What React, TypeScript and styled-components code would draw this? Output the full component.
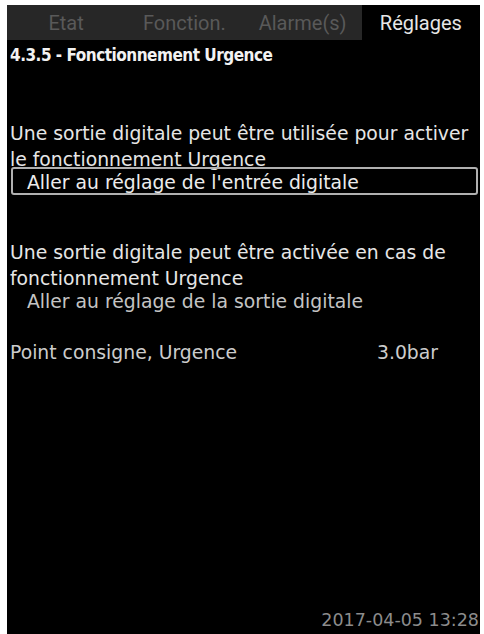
import { createGlobalStyle } from "styled-components";
import styled from "styled-components";

const GlobalStyle = createGlobalStyle`
  html, body {
    margin: 0;
    padding: 0;
    background: #ffffff;
  }
  body {
    font-family: "DejaVu Sans", Verdana, sans-serif;
  }
`;

type Tab = { label: string; active?: boolean };

const tabs: Tab[] = [
  { label: "Etat" },
  { label: "Fonction." },
  { label: "Alarme(s)" },
  { label: "Réglages", active: true },
];

type Section = { text: string[]; link: string; focused?: boolean };

const sections: Section[] = [
  {
    text: [
      "Une sortie digitale peut être utilisée pour activer",
      "le fonctionnement Urgence",
    ],
    link: "Aller au réglage de l'entrée digitale",
    focused: true,
  },
  {
    text: [
      "Une sortie digitale peut être activée en cas de",
      "fonctionnement Urgence",
    ],
    link: "Aller au réglage de la sortie digitale",
  },
];

export default function App() {
  return (
    <>
      <GlobalStyle />
      <Screen>
        <TabBar>
          {tabs.map((tab) => (
            <TabItem key={tab.label} $active={!!tab.active}>
              {tab.label}
            </TabItem>
          ))}
        </TabBar>
        <Title>4.3.5 - Fonctionnement Urgence</Title>
        <Body>
          {sections.map((section) => (
            <Block key={section.link}>
              <Paragraph>
                {section.text.map((line) => (
                  <div key={line}>{line}</div>
                ))}
              </Paragraph>
              <LinkRow $focused={!!section.focused}>{section.link}</LinkRow>
            </Block>
          ))}
          <ValueRow>
            <span>Point consigne, Urgence</span>
            <Value>3.0bar</Value>
          </ValueRow>
        </Body>
        <Footer>2017-04-05 13:28</Footer>
      </Screen>
    </>
  );
}

const Screen = styled.div`
  box-sizing: border-box;
  width: 473px;
  height: 629px;
  margin: 5px 0 0 7px;
  background: #000;
  color: #e4e4e4;
  display: flex;
  flex-direction: column;
  overflow: hidden;
`;

const TabBar = styled.div`
  display: flex;
  height: 35px;
  background: #272727;
`;

const TabItem = styled.div<{ $active: boolean }>`
  flex: 1 1 0;
  display: flex;
  align-items: center;
  justify-content: center;
  font-family: Roboto, "DejaVu Sans", sans-serif;
  font-size: 20px;
  color: ${({ $active }) => ($active ? "#e6e6e6" : "#595959")};
  background: ${({ $active }) => ($active ? "#000" : "transparent")};
`;

const Title = styled.div`
  padding: 5px 0 0 3px;
  height: 20px;
  line-height: 20px;
  font-family: "DejaVu Sans Condensed", "Liberation Sans Narrow", sans-serif;
  font-stretch: condensed;
  font-weight: 700;
  font-size: 17px;
  letter-spacing: -0.5px;
  color: #f2f2f2;
`;

const Body = styled.div`
  display: flex;
  flex-direction: column;
  padding: 56px 0 0 3px;
  font-size: 18.8px;
  line-height: 26px;
`;

const Block = styled.div`
  display: flex;
  flex-direction: column;

  & + & {
    margin-top: 45px;
  }
`;

const Paragraph = styled.div`
  color: #e6e6e6;
`;

const LinkRow = styled.div<{ $focused: boolean }>`
  box-sizing: border-box;
  height: 28px;
  margin: -6px 2px 0 1px;
  padding: 4px 0 0 14px;
  line-height: 20px;
  border: 2px solid ${({ $focused }) => ($focused ? "#b0b0b0" : "transparent")};
  border-radius: 3px;
  color: ${({ $focused }) => ($focused ? "#ececec" : "#c4c4c4")};
`;

const ValueRow = styled.div`
  display: flex;
  margin-top: 26px;
  color: #cccccc;
`;

const Value = styled.span`
  margin-left: auto;
  margin-right: 42px;
`;

const Footer = styled.div`
  margin-top: auto;
  padding: 0 1px 3px 0;
  text-align: right;
  font-size: 17.5px;
  line-height: 22px;
  color: #8c8c8c;
`;
